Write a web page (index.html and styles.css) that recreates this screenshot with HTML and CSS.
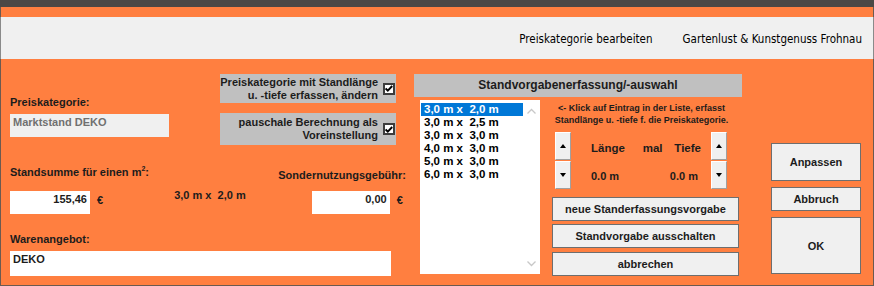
FILE: index.html
```html
<!DOCTYPE html>
<html lang="de">

<head>
    <meta charset="UTF-8">
    <title>Preiskategorie bearbeiten</title>
    <link rel="stylesheet" href="styles.css">
</head>

<body>
    <div class="window">
        <div class="titlebar"></div>
        <div class="stripe"></div>
        <div class="header">
            <span>Preiskategorie bearbeiten</span>
            <span>Gartenlust &amp; Kunstgenuss Frohnau</span>
        </div>

        <div class="form">
            <!-- linke Spalte -->
            <div class="left">
                <div class="top-row">
                    <div class="cat">
                        <div class="label">Preiskategorie:</div>
                        <div class="field locked">Marktstand DEKO</div>
                    </div>
                    <div class="checks">
                        <div class="check-panel first">
                            <span>Preiskategorie mit Standlänge<br>u. -tiefe erfassen, ändern</span>
                            <span class="box"><svg width="8" height="7" viewBox="0 0 8 7"><path d="M0.6 3.4 L2.8 5.6 L7.2 1" fill="none" stroke="#000" stroke-width="1.9"/></svg></span>
                        </div>
                        <div class="check-panel second">
                            <span>pauschale Berechnung als<br>Voreinstellung</span>
                            <span class="box"><svg width="8" height="7" viewBox="0 0 8 7"><path d="M0.6 3.4 L2.8 5.6 L7.2 1" fill="none" stroke="#000" stroke-width="1.9"/></svg></span>
                        </div>
                    </div>
                </div>

                <div class="label-row">
                    <div class="label">Standsumme für einen m<sup>2</sup>:</div>
                    <div class="label low">Sondernutzungsgebühr:</div>
                </div>

                <div class="amount-row">
                    <div class="field num sum">155,46</div>
                    <span class="euro">€</span>
                    <span class="size">3,0 m x&nbsp; 2,0 m</span>
                    <div class="field num fee">0,00</div>
                    <span class="euro">€</span>
                </div>

                <div class="label goods-label">Warenangebot:</div>
                <div class="field goods">DEKO</div>
            </div>

            <!-- mittlere Spalte -->
            <div class="center">
                <div class="panel-title">Standvorgabenerfassung/-auswahl</div>
                <div class="center-body">
                    <div class="listbox">
                        <ul>
                            <li class="selected">3,0 m x&nbsp; 2,0 m</li>
                            <li>3,0 m x&nbsp; 2,5 m</li>
                            <li>3,0 m x&nbsp; 3,0 m</li>
                            <li>4,0 m x&nbsp; 3,0 m</li>
                            <li>5,0 m x&nbsp; 3,0 m</li>
                            <li>6,0 m x&nbsp; 3,0 m</li>
                        </ul>
                        <div class="scrollbar">
                            <svg width="17" height="17" viewBox="0 0 17 17"><path d="M4.5 10.5 L8.5 6.5 L12.5 10.5" fill="none" stroke="#c8c8c8" stroke-width="1.3"/></svg>
                            <svg width="17" height="17" viewBox="0 0 17 17"><path d="M4.5 6.5 L8.5 10.5 L12.5 6.5" fill="none" stroke="#c8c8c8" stroke-width="1.3"/></svg>
                        </div>
                    </div>
                    <div class="tools">
                        <div class="hint">&lt;- Klick auf Eintrag in der Liste, erfasst<br>Standlänge u. -tiefe f. die Preiskategorie.</div>
                        <div class="spin-area">
                            <div class="spin">
                                <div class="spin-btn"><span class="tri up"></span></div>
                                <div class="spin-btn"><span class="tri down"></span></div>
                            </div>
                            <div class="dims">
                                <div class="dims-row">
                                    <span>Länge</span>
                                    <span class="mal">mal</span>
                                    <span>Tiefe</span>
                                </div>
                                <div class="dims-row values">
                                    <span>0.0 m</span>
                                    <span>0.0 m</span>
                                </div>
                            </div>
                            <div class="spin">
                                <div class="spin-btn"><span class="tri up"></span></div>
                                <div class="spin-btn"><span class="tri down"></span></div>
                            </div>
                        </div>
                        <button class="btn wide first">neue Standerfassungsvorgabe</button>
                        <button class="btn wide">Standvorgabe ausschalten</button>
                        <button class="btn wide last">abbrechen</button>
                    </div>
                </div>
            </div>

            <!-- rechte Spalte -->
            <div class="right">
                <button class="btn adjust">Anpassen</button>
                <button class="btn cancel">Abbruch</button>
                <button class="btn ok">OK</button>
            </div>
        </div>
    </div>
</body>

</html>
```

FILE: styles.css
```css
html, body {
    margin: 0;
    padding: 0;
    width: 874px;
    height: 286px;
    overflow: hidden;
    font-family: "Liberation Sans", Arial, sans-serif;
    font-size: 11px;
    font-weight: bold;
    color: #1c1c1c;
    background: #ff7f40;
}

.window {
    width: 874px;
    height: 286px;
    box-sizing: border-box;
}

.titlebar {
    height: 7px;
    background: #4b4846;
}

.stripe {
    height: 10px;
    background: #ff7f40;
    border-left: 1px solid #6b5a50;
    border-right: 1px solid #6b5a50;
}

.header {
    height: 42px;
    background: #f0f0f0;
    border-left: 1px solid #8a8a8a;
    border-right: 1px solid #8a8a8a;
    display: flex;
    justify-content: flex-end;
    align-items: center;
    gap: 30px;
    padding-right: 11px;
    font-family: "DejaVu Sans Condensed", "Liberation Sans Narrow", sans-serif;
    font-weight: normal;
    font-size: 11.5px;
    color: #000;
    padding-top: 2px;
    box-sizing: border-box;
}

.form {
    height: 227px;
    box-sizing: border-box;
    border-left: 1px solid #6b5a50;
    border-right: 1px solid #6b5a50;
    border-bottom: 1px solid #6b5a50;
    display: flex;
    padding: 15px 0 0 9px;
}

/* linke Spalte */
.left {
    width: 396px;
}

.top-row {
    display: flex;
    height: 71px;
}

.cat {
    width: 209px;
    padding-top: 22px;
}

.label {
    line-height: 12px;
    height: 12px;
}

.label sup {
    font-size: 7px;
    line-height: 0;
}

.field {
    box-sizing: border-box;
    height: 23px;
    padding: 2px 3px;
    line-height: 12px;
    background: #fff;
}

.locked {
    margin-top: 6px;
    width: 159px;
    background: #f0f0f0;
    color: #707070;
}

.checks {
    display: flex;
    flex-direction: column;
    gap: 10px;
    padding-left: 1px;
}

.check-panel {
    width: 176px;
    box-sizing: border-box;
    background: #c0c0c0;
    display: flex;
    align-items: center;
    justify-content: flex-end;
    gap: 5px;
    padding-right: 1px;
    text-align: right;
    line-height: 13px;
}

.check-panel.first {
    height: 29px;
}

.check-panel.second {
    height: 32px;
}

.box {
    width: 12px;
    height: 12px;
    box-sizing: border-box;
    border: 2px solid #3c3c3c;
    background: #fff;
    display: flex;
    align-items: center;
    justify-content: center;
}

.label-row {
    display: flex;
    justify-content: space-between;
    margin-top: 21px;
}

.label.low {
    margin-top: 3px;
}

.amount-row {
    display: flex;
    align-items: flex-start;
    margin-top: 10px;
    height: 23px;
}

.num {
    text-align: right;
}

.sum {
    width: 80px;
}

.fee {
    width: 78px;
    margin-left: 66px;
}

.euro {
    margin-left: 7px;
    margin-top: 3px;
    line-height: 12px;
}

.size {
    margin-left: 71px;
    line-height: 12px;
    margin-top: -2px;
}

.goods-label {
    margin-top: 19px;
}

.goods {
    margin-top: 6px;
    width: 381px;
    height: 25px;
}

/* mittlere Spalte */
.center {
    width: 328px;
    margin-left: 8px;
}

.panel-title {
    height: 23px;
    background: #c0c0c0;
    text-align: center;
    line-height: 23px;
    font-size: 12px;
}

.center-body {
    display: flex;
}

.listbox {
    margin: 3px 0 0 6px;
    width: 120px;
    height: 174px;
    background: #fff;
    display: flex;
    box-sizing: border-box;
    padding: 3px 0 0 1px;
}

.listbox ul {
    list-style: none;
    margin: 0;
    padding: 0;
    width: 102px;
}

.listbox li {
    height: 13px;
    line-height: 13px;
    padding-left: 3px;
    font-size: 11.5px;
    color: #000;
}

.listbox li.selected {
    background: #0078d7;
    color: #fff;
}

.scrollbar {
    width: 17px;
    display: flex;
    flex-direction: column;
    justify-content: space-between;
    padding-bottom: 2px;
}

.tools {
    margin-left: 12px;
    width: 187px;
    display: flex;
    flex-direction: column;
}

.hint {
    font-size: 9px;
    line-height: 12px;
    text-align: center;
    margin-top: 5px;
    margin-right: 8px;
    color: #1c1c1c;
}

.spin-area {
    display: flex;
    margin-top: 6px;
    height: 57px;
    padding-left: 3px;
}

.spin {
    display: flex;
    flex-direction: column;
    gap: 1px;
}

.spin-btn {
    width: 16px;
    height: 28px;
    box-sizing: border-box;
    background: #f0f0f0;
    border-top: 1px solid #fff;
    border-left: 1px solid #fff;
    border-right: 1px solid #a0a0a0;
    border-bottom: 1px solid #a0a0a0;
    display: flex;
    align-items: center;
    justify-content: center;
}

.tri {
    width: 0;
    height: 0;
    border-left: 3.5px solid transparent;
    border-right: 3.5px solid transparent;
}

.tri.up {
    border-bottom: 4px solid #000;
}

.tri.down {
    border-top: 4px solid #000;
}

.dims {
    width: 140px;
    display: flex;
    flex-direction: column;
    padding-top: 10px;
}

.dims-row {
    display: flex;
    justify-content: space-between;
    padding: 0 10px 0 20px;
    font-size: 11.5px;
    line-height: 13px;
}

.dims-row .mal {
    margin-left: 6px;
}

.dims-row.values {
    margin-top: 15px;
    padding-right: 13px;
    font-size: 11px;
}

.btn {
    font-family: inherit;
    font-weight: bold;
    font-size: 11px;
    color: #1c1c1c;
    background: #f0f0f0;
    border: 1px solid #6e6e6e;
    border-radius: 0;
    padding: 0;
    box-sizing: border-box;
}

.wide {
    width: 187px;
    height: 24px;
    margin-top: 3px;
}

.wide.first {
    margin-top: 8px;
}

.wide.last {
    margin-top: 4px;
}

/* rechte Spalte */
.right {
    width: 90px;
    margin-left: 29px;
    display: flex;
    flex-direction: column;
    padding-top: 69px;
}

.adjust {
    height: 38px;
}

.cancel {
    height: 24px;
    margin-top: 6px;
}

.ok {
    height: 57px;
    margin-top: 6px;
}
```
